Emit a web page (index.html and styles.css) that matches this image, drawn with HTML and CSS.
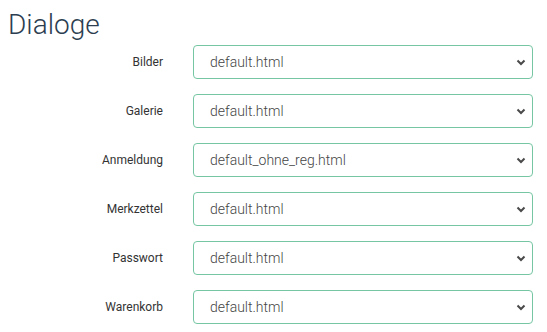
FILE: index.html
```html
<!DOCTYPE html>
<html>
<head>
<meta charset="utf-8">
<link rel="stylesheet" href="styles.css">
</head>
<body>
<h1 class="title">Dialoge</h1>
<div class="form">
  <label class="label">Bilder</label>
  <div class="select"><span>default.html</span><svg class="chev" width="10" height="7" viewBox="0 0 10 7"><path d="M1.5 1.5 L5 5 L8.5 1.5" fill="none" stroke="#4a4a4a" stroke-width="2"/></svg></div>
  <label class="label">Galerie</label>
  <div class="select"><span>default.html</span><svg class="chev" width="10" height="7" viewBox="0 0 10 7"><path d="M1.5 1.5 L5 5 L8.5 1.5" fill="none" stroke="#4a4a4a" stroke-width="2"/></svg></div>
  <label class="label">Anmeldung</label>
  <div class="select"><span>default_ohne_reg.html</span><svg class="chev" width="10" height="7" viewBox="0 0 10 7"><path d="M1.5 1.5 L5 5 L8.5 1.5" fill="none" stroke="#4a4a4a" stroke-width="2"/></svg></div>
  <label class="label">Merkzettel</label>
  <div class="select"><span>default.html</span><svg class="chev" width="10" height="7" viewBox="0 0 10 7"><path d="M1.5 1.5 L5 5 L8.5 1.5" fill="none" stroke="#4a4a4a" stroke-width="2"/></svg></div>
  <label class="label">Passwort</label>
  <div class="select"><span>default.html</span><svg class="chev" width="10" height="7" viewBox="0 0 10 7"><path d="M1.5 1.5 L5 5 L8.5 1.5" fill="none" stroke="#4a4a4a" stroke-width="2"/></svg></div>
  <label class="label">Warenkorb</label>
  <div class="select"><span>default.html</span><svg class="chev" width="10" height="7" viewBox="0 0 10 7"><path d="M1.5 1.5 L5 5 L8.5 1.5" fill="none" stroke="#4a4a4a" stroke-width="2"/></svg></div>
</div>
</body>
</html>
```
FILE: styles.css
```css
html, body {
  margin: 0;
  padding: 0;
  background: #fff;
  font-family: Roboto, "Liberation Sans", sans-serif;
}
.title {
  margin: 0;
  padding: 8px 0 0 8px;
  font-size: 28px;
  line-height: 33px;
  font-weight: 300;
  color: #2c3e50;
}
.form {
  display: grid;
  grid-template-columns: 163px 340px;
  column-gap: 30px;
  row-gap: 15px;
  margin-top: 4px;
}
.label {
  display: flex;
  align-items: center;
  justify-content: flex-end;
  font-size: 12px;
  color: #333;
}
.select {
  box-sizing: border-box;
  height: 34px;
  border: 1px solid #76c6a4;
  border-radius: 4px;
  display: flex;
  align-items: center;
  justify-content: space-between;
  padding: 0 6px 0 16px;
  font-size: 14px;
  font-weight: 300;
  color: #444;
}
.chev {
  display: block;
}
```
